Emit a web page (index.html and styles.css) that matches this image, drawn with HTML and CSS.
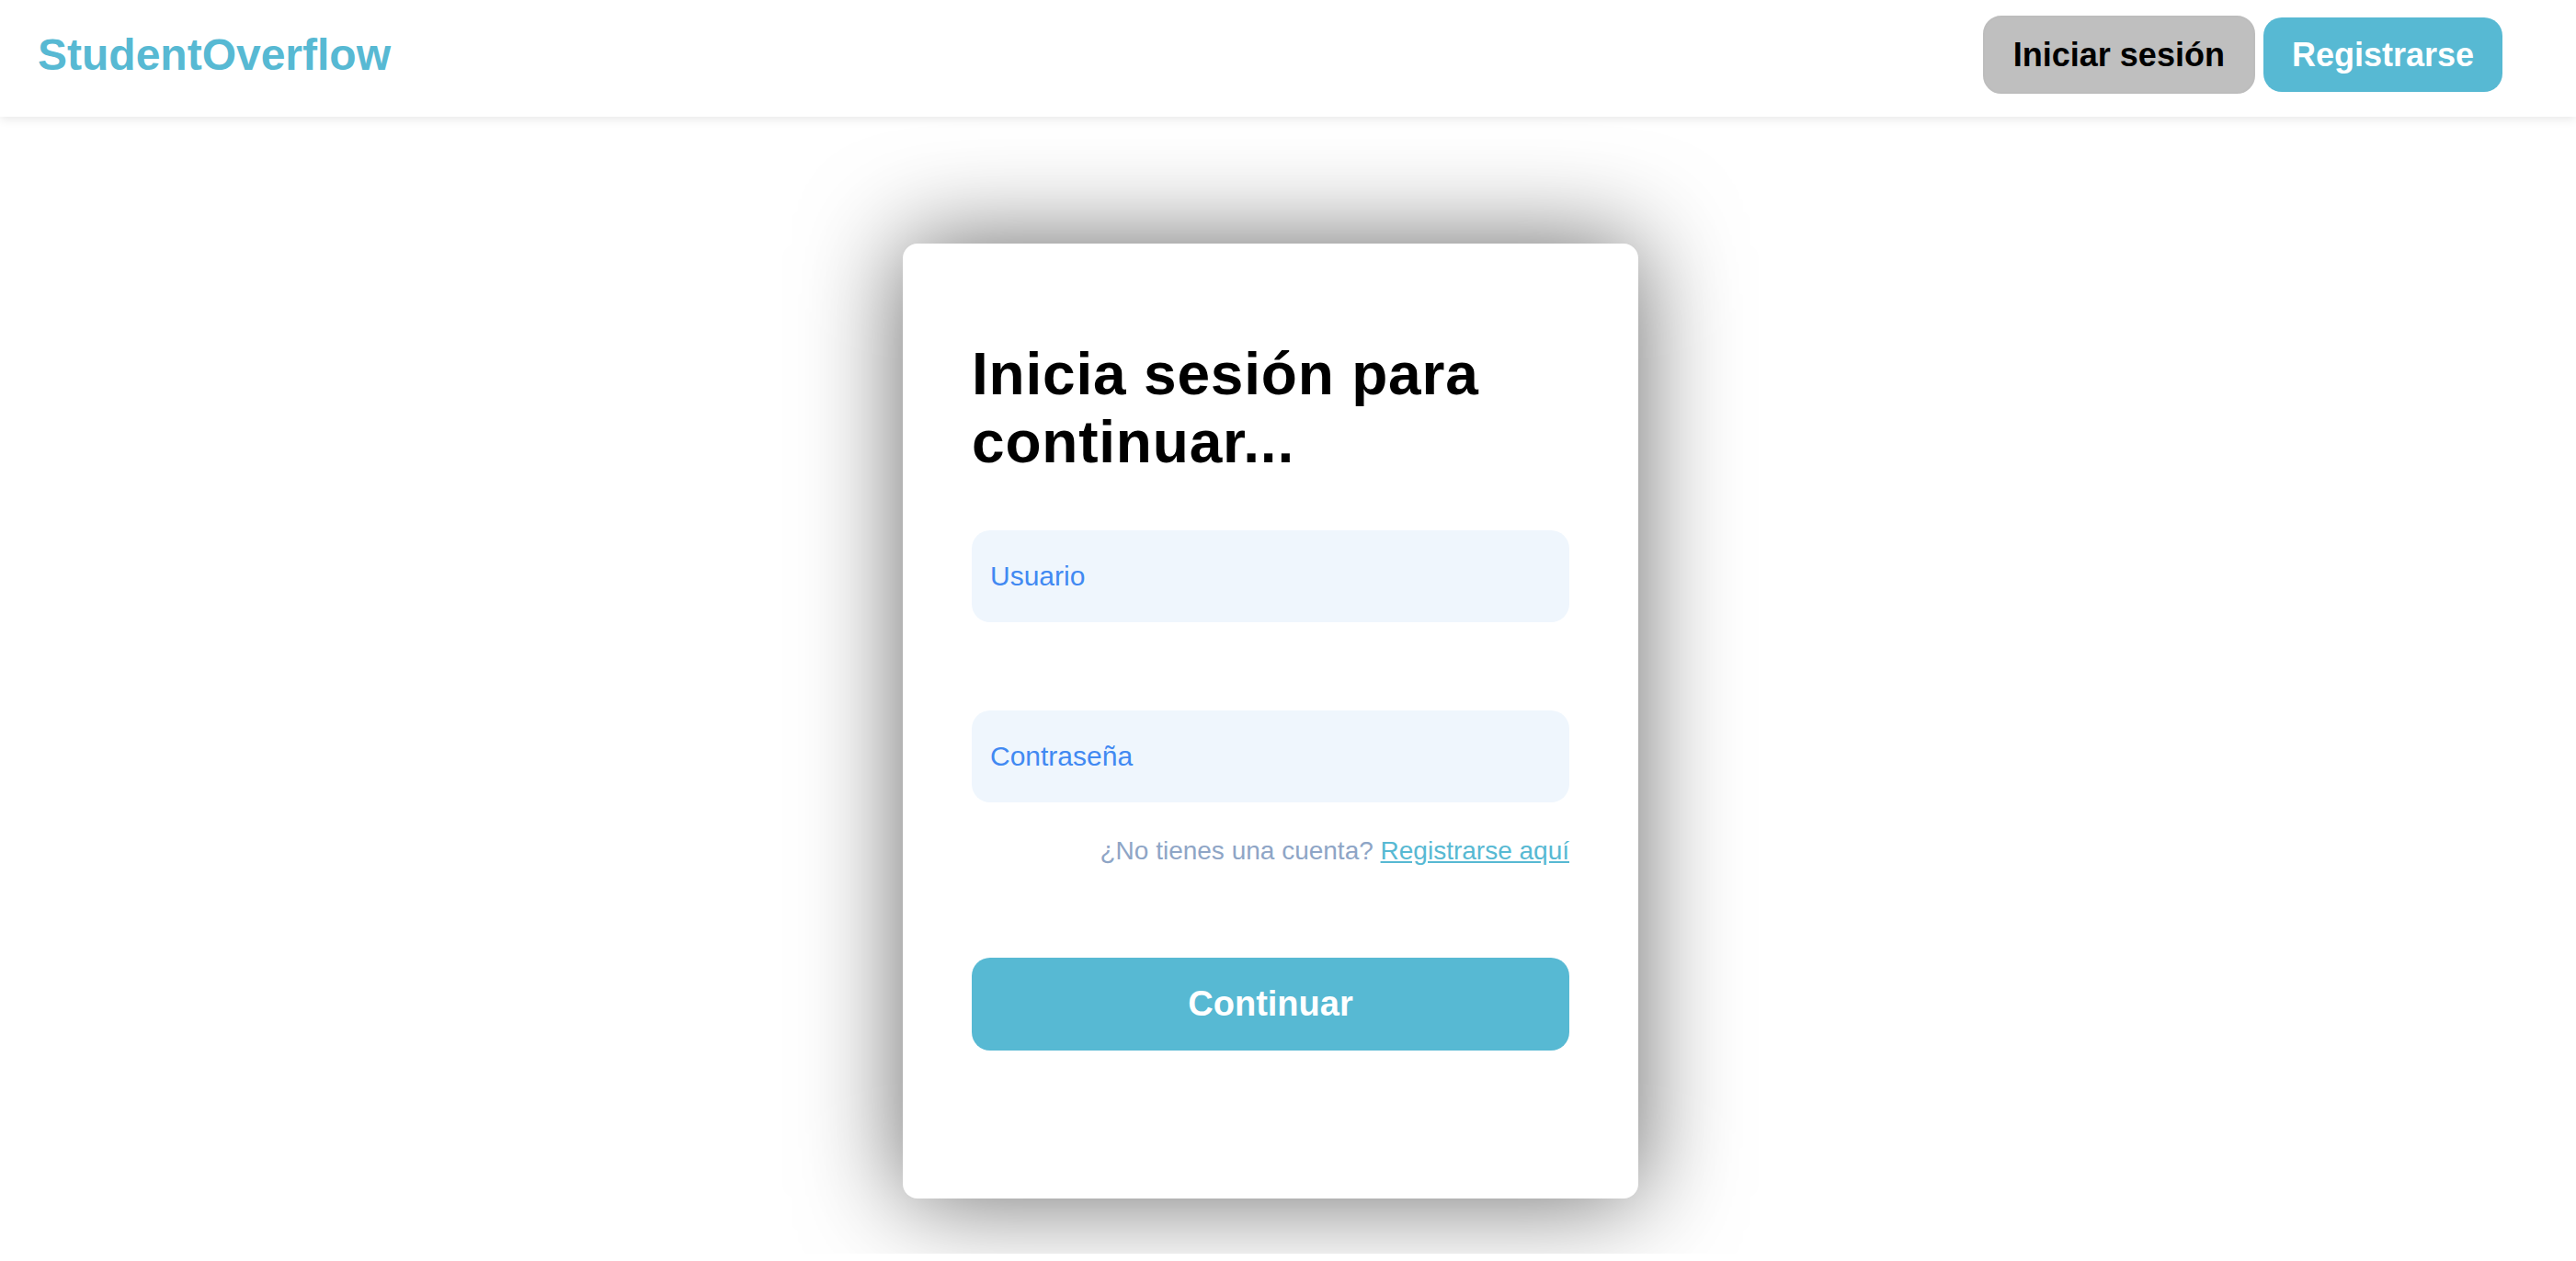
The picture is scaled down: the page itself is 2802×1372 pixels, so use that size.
FILE: index.html
```html
<!DOCTYPE html>
<html lang="es">
<head>
<meta charset="utf-8">
<title>StudentOverflow</title>
<link rel="stylesheet" href="styles.css">
</head>
<body>
<header class="topbar">
  <a class="brand" href="#">StudentOverflow</a>
  <nav class="actions">
    <button class="btn btn-login">Iniciar sesión</button>
    <button class="btn btn-register">Registrarse</button>
  </nav>
</header>
<main class="main">
  <section class="card">
    <h1 class="title">Inicia sesión para continuar...</h1>
    <form class="form">
      <input class="field" type="text" placeholder="Usuario">
      <input class="field field-gap" type="password" placeholder="Contraseña">
      <p class="hint">¿No tienes una cuenta? <a class="hint-link" href="#">Registrarse aquí</a></p>
      <button class="submit" type="button">Continuar</button>
    </form>
  </section>
</main>
</body>
</html>
```
FILE: styles.css
```css
* { box-sizing: border-box; }
html, body { margin: 0; padding: 0; background: #ffffff; }
body { font-family: "Liberation Sans", Arial, sans-serif; color: #000; }

.topbar {
  height: 127px;
  padding: 0 80px 8px 41px;
  display: flex;
  align-items: center;
  justify-content: space-between;
  background: #fff;
  box-shadow: 0 3px 10px rgba(0, 0, 0, 0.09);
  position: relative;
  z-index: 1;
}
.brand {
  font-size: 48px;
  font-weight: bold;
  color: #57b9d3;
  text-decoration: none;
  line-height: normal;
}
.actions { display: flex; align-items: center; gap: 9px; }
.btn {
  font-family: "Liberation Sans", Arial, sans-serif;
  font-size: 36px;
  font-weight: bold;
  line-height: 41px;
  padding: 20px 31px;
  border-radius: 20px;
  border: none;
  cursor: pointer;
}
.btn-login { background: #bfbfbf; color: #000; border: 2px solid #bdbdbd; }
.btn-register { background: #57b9d3; color: #fff; }

.main {
  display: flex;
  justify-content: center;
  padding: 138px 38px 60px 0;
}
.card {
  width: 800px;
  background: #fff;
  border-radius: 16px;
  padding: 105px 75px 161px;
  box-shadow: 0 0 110px rgba(0, 0, 0, 0.6);
}
.title {
  margin: 0;
  font-size: 64px;
  line-height: 74px;
  font-weight: bold;
  letter-spacing: 0.8px;
  padding-right: 30px;
}
.form { display: flex; flex-direction: column; margin-top: 59px; }
.field {
  height: 100px;
  border: none;
  outline: none;
  background: #eff6fd;
  border-radius: 20px;
  padding: 0 20px;
  font-family: "Liberation Sans", Arial, sans-serif;
  font-size: 30px;
  color: #3b82f6;
}
.field::placeholder { color: #4189f2; opacity: 1; }
.field-gap { margin-top: 96px; }
.hint {
  margin: 37px 0 0;
  text-align: right;
  font-size: 28px;
  line-height: 32px;
  color: #8ea5c6;
}
.hint-link { color: #57b9d3; text-decoration: underline; }
.submit {
  margin-top: 100px;
  height: 101px;
  border: none;
  border-radius: 20px;
  background: #57b9d3;
  color: #fff;
  font-family: "Liberation Sans", Arial, sans-serif;
  font-size: 38px;
  font-weight: bold;
  cursor: pointer;
}
```
